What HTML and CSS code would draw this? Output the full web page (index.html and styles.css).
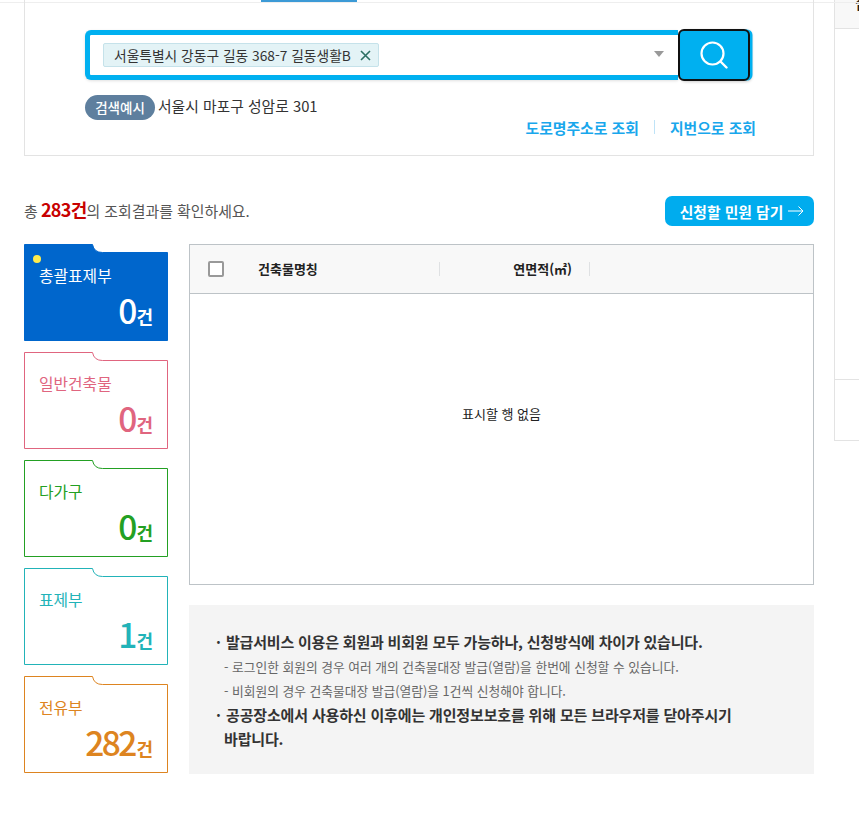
FILE: index.html
```html
<!DOCTYPE html>
<html lang="ko">
<head>
<meta charset="utf-8">
<title>건축물대장 조회</title>
<link rel="stylesheet" href="styles.css">
</head>
<body>
<div class="page">
  <main class="main">
    <div class="tabline"><span class="tabactive"></span></div>
    <section class="panel">
      <div class="searchrow">
        <div class="searchbox">
          <span class="tag">서울특별시 강동구 길동 368-7 길동생활B
            <svg class="tagx" viewBox="0 0 11 11" width="11" height="11"><path d="M1 1L10 10M10 1L1 10" stroke="#2b6f62" stroke-width="1.6" fill="none"/></svg>
          </span>
          <span class="caret"></span>
        </div>
        <button class="searchbtn" type="button" aria-label="검색">
          <svg viewBox="0 0 28 28" width="28" height="28"><circle cx="12.5" cy="12.5" r="11" stroke="#fff" stroke-width="2.2" fill="none"/><path d="M20.5 20.5L26.5 26.5" stroke="#fff" stroke-width="2.4" stroke-linecap="round"/></svg>
        </button>
      </div>
      <div class="example"><span class="pill">검색예시</span><span class="extext">서울시 마포구 성암로 301</span></div>
      <div class="links"><a>도로명주소로 조회</a><i class="divider"></i><a>지번으로 조회</a></div>
    </section>
    <div class="resulthead">
      <p class="total">총 <strong>283건</strong>의 조회결과를 확인하세요.</p>
      <button class="cartbtn" type="button">신청할 민원 담기
        <svg viewBox="0 0 16 10" width="16" height="10"><path d="M0 5H15M10.5 .5L15 5L10.5 9.5" stroke="#fff" fill="none"/></svg>
      </button>
    </div>
    <div class="content">
      <div class="cards">
        <div class="card active">
          <svg class="shape" viewBox="0 0 144 97" width="144" height="97"><path d="M.5 96.5V.5H68.5Q70 8.5 78.5 8.5H143.5V96.5Z"/></svg>
          <i class="dot"></i>
          <div class="label">총괄표제부</div>
          <div class="count"><b>0</b><span>건</span></div>
        </div>
        <div class="card pink">
          <svg class="shape" viewBox="0 0 144 97" width="144" height="97"><path d="M.5 96.5V.5H68.5Q70 8.5 78.5 8.5H143.5V96.5Z"/></svg>
          <div class="label">일반건축물</div>
          <div class="count"><b>0</b><span>건</span></div>
        </div>
        <div class="card green">
          <svg class="shape" viewBox="0 0 144 97" width="144" height="97"><path d="M.5 96.5V.5H68.5Q70 8.5 78.5 8.5H143.5V96.5Z"/></svg>
          <div class="label">다가구</div>
          <div class="count"><b>0</b><span>건</span></div>
        </div>
        <div class="card teal">
          <svg class="shape" viewBox="0 0 144 97" width="144" height="97"><path d="M.5 96.5V.5H68.5Q70 8.5 78.5 8.5H143.5V96.5Z"/></svg>
          <div class="label">표제부</div>
          <div class="count"><b>1</b><span>건</span></div>
        </div>
        <div class="card orange">
          <svg class="shape" viewBox="0 0 144 97" width="144" height="97"><path d="M.5 96.5V.5H68.5Q70 8.5 78.5 8.5H143.5V96.5Z"/></svg>
          <div class="label">전유부</div>
          <div class="count"><b>282</b><span>건</span></div>
        </div>
      </div>
      <div class="rightcol">
        <div class="grid">
          <div class="gridhead">
            <div class="col colcheck"><span class="checkbox"></span></div>
            <div class="col colname">건축물명칭</div>
            <div class="col colarea">연면적(㎡)</div>
          </div>
          <div class="gridbody">표시할 행 없음</div>
        </div>
        <div class="notice">
          <p class="strong"><span>·</span>발급서비스 이용은 회원과 비회원 모두 가능하나, 신청방식에 차이가 있습니다.</p>
          <p class="sub">- 로그인한 회원의 경우 여러 개의 건축물대장 발급(열람)을 한번에 신청할 수 있습니다.</p>
          <p class="sub">- 비회원의 경우 건축물대장 발급(열람)을 1건씩 신청해야 합니다.</p>
          <p class="strong wrap"><span>·</span>공공장소에서 사용하신 이후에는 개인정보보호를 위해 모든 브라우저를 닫아주시기<br>바랍니다.</p>
        </div>
      </div>
    </div>
  </main>
  <aside class="aside">
    <div class="asidehead"><span class="asidechar">合</span></div>
    <div class="asidebody"></div>
    <div class="asidefoot"></div>
  </aside>
</div>
</body>
</html>
```

FILE: styles.css
```css
* { box-sizing: border-box; }
html, body { margin: 0; padding: 0; height: 100%; overflow: hidden; background: #fff; }
body { font-family: "Noto Sans CJK KR", "Noto Sans", sans-serif; color: #222; }
p { margin: 0; }
.page { display: flex; width: 859px; height: 822px; align-items: flex-start; padding-left: 24px; }
.main { width: 790px; flex: none; position: relative; }
.tabline { position: absolute; left: -24px; right: -45px; top: 0; height: 3px; border-bottom: 1px solid #eeeeee; }
.tabactive { position: absolute; left: 261px; top: 0; width: 96px; height: 2px; background: #3c9ad6; }
.panel { height: 156px; border: 1px solid #e3e3e3; border-top: 0; padding: 29px 0 0 60px; position: relative; }
.searchrow { display: flex; align-items: stretch; width: 669px; height: 52px; }
.searchbox { flex: none; width: 593px; height: 50px; margin-top: 1px; border: 5px solid #00b0f0; border-right: 0; border-radius: 6px 0 0 6px; background: #fff; display: flex; align-items: center; padding-left: 13px; position: relative; box-shadow: 0 1px 3px rgba(0,0,0,.12); }
.tag { display: inline-flex; align-items: center; height: 24px; width: 276px; padding-left: 10px; background: #e3f3f6; border: 1px solid #c5e2ea; border-radius: 2px; font-size: 13.75px; color: #333; white-space: nowrap; }
.tagx { margin-left: 9px; }
.caret { position: absolute; right: 14px; top: 16px; border-left: 5px solid transparent; border-right: 5px solid transparent; border-top: 6px solid #999; }
.searchbtn { flex: none; width: 72px; height: 52px; margin: 0; padding: 0; background: #00b0f0; border: 2px solid #111; border-radius: 6px; display: flex; align-items: center; justify-content: center; box-shadow: 3px 0 0 -0.5px #00b0f0, 2px 1px 3px rgba(0,0,0,.2); }
.example { display: flex; align-items: flex-start; margin-top: 14px; height: 26px; }
.pill { width: 70px; height: 25px; padding-bottom: 1px; border-radius: 13px; background: #5e7f9e; color: #fff; font-size: 13.5px; font-weight: 500; display: flex; align-items: center; justify-content: center; }
.extext { margin-left: 3px; font-size: 14.8px; line-height: 22px; color: #333; }
.links { position: absolute; right: 57px; top: 115px; display: flex; align-items: center; height: 24px; font-size: 14.85px; font-weight: 700; color: #19a7ec; }
.divider { width: 1px; height: 14px; background: #bfe3f7; margin: 0 15px; }
.resulthead { display: flex; justify-content: space-between; align-items: center; margin-top: 40px; height: 30px; }
.total { font-size: 14.9px; color: #555; margin-bottom: 4px; }
.total strong { font-size: 18px; font-weight: 700; color: #c80000; letter-spacing: -.7px; margin-left: -1px; }
.cartbtn { width: 149px; height: 30px; border: 0; border-radius: 7px; background: #00acee; color: #fff; font: 700 14.8px "Noto Sans CJK KR", sans-serif; display: flex; align-items: center; justify-content: center; gap: 5px; padding: 0 0 0 5px; white-space: nowrap; }
.content { display: flex; gap: 21px; margin-top: 18px; }
.cards { width: 144px; flex: none; display: flex; flex-direction: column; gap: 11px; }
.card { position: relative; height: 97px; padding: 20px 15px 0; }
.shape { position: absolute; left: 0; top: 0; fill: none; stroke: currentColor; }
.label, .count { position: relative; }
.label { font-size: 15.8px; line-height: 24px; }
.count { display: flex; justify-content: flex-end; align-items: baseline; margin-top: 2px; line-height: 40px; }
.count b { font-size: 33.5px; font-weight: 500; letter-spacing: -2.6px; margin-right: 1.6px; }
.count span { font-size: 18px; font-weight: 700; }
.active { color: #fff; }
.active .shape { fill: #0066cc; stroke: #0066cc; }
.dot { position: absolute; left: 9px; top: 11px; width: 8px; height: 8px; border-radius: 50%; background: #ffec4d; }
.pink { color: #e0657f; }
.green { color: #23a023; }
.teal { color: #22b3b8; }
.orange { color: #dd8420; }
.rightcol { width: 625px; flex: none; }
.grid { height: 341px; border: 1px solid #bdc3c7; display: flex; flex-direction: column; }
.gridhead { height: 49px; flex: none; background: #f8f8f8; border-bottom: 1px solid #bdc3c7; display: flex; align-items: center; font-size: 13px; font-weight: 700; color: #222; }
.col { display: flex; align-items: center; height: 14px; }
.colcheck { width: 68px; padding-left: 18px; }
.checkbox { width: 16px; height: 16px; border: 2px solid #999; background: #fff; border-radius: 2px; flex: none; }
.colname { width: 182px; padding-bottom: 2px; border-right: 1px solid #dfe1e3; }
.colarea { width: 150px; padding-bottom: 2px; justify-content: flex-end; padding-right: 17px; border-right: 1px solid #dfe1e3; }
.gridbody { flex: 1; display: flex; align-items: center; justify-content: center; font-size: 13px; color: #222; padding-bottom: 51px; }
.notice { margin-top: 20px; height: 169px; background: #f4f4f4; padding: 24px 0 0 27px; font-size: 15px; }
.notice p span { display: inline-block; width: 10px; text-indent: 0; }
.strong { font-weight: 700; color: #333; line-height: 26px; letter-spacing: -.2px; }
.strong.wrap { line-height: 24px; padding-left: 8px; text-indent: -8px; letter-spacing: -.16px; }
.sub { font-size: 12.75px; color: #666; line-height: 24px; padding-left: 8px; }
.aside { width: 25px; flex: none; margin-left: 20px; border-left: 1px solid #e3e3e3; height: 441px; border-bottom: 1px solid #e3e3e3; display: flex; flex-direction: column; overflow: hidden; }
.asidehead { height: 29px; background: #f8f8f8; border-bottom: 1px solid #e3e3e3; font-size: 14px; line-height: 14px; color: #222; padding-left: 20px; white-space: nowrap; }
.asidechar { display: block; margin-top: -4px; font-weight: 700; }
.asidebody { height: 351px; border-bottom: 1px solid #e3e3e3; }
.asidefoot { flex: 1; }
```
